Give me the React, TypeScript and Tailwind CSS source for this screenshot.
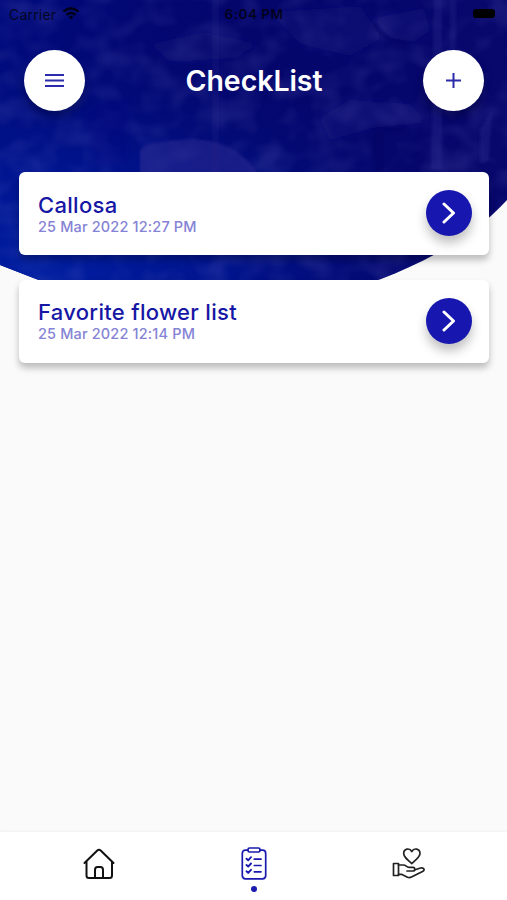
type CheckItem = {
  id: number;
  title: string;
  date: string;
};

const items: CheckItem[] = [
  { id: 1, title: 'Callosa', date: '25 Mar 2022 12:27 PM' },
  { id: 2, title: 'Favorite flower list', date: '25 Mar 2022 12:14 PM' },
];

function HeaderBackground() {
  return (
    <svg className="absolute left-0 top-0" width="507" height="312" viewBox="0 0 507 312" fill="none">
      <defs>
        <linearGradient id="base" x1="0" y1="0" x2="507" y2="0" gradientUnits="userSpaceOnUse">
          <stop offset="0" stopColor="#000a7c" />
          <stop offset="0.45" stopColor="#04066c" />
          <stop offset="1" stopColor="#07076c" />
        </linearGradient>
        <radialGradient id="glow" cx="0" cy="0" r="1" gradientUnits="userSpaceOnUse" gradientTransform="translate(30 280) scale(440 240)">
          <stop offset="0" stopColor="#001fa2" />
          <stop offset="0.45" stopColor="#001898" stopOpacity="0.75" />
          <stop offset="1" stopColor="#00107c" stopOpacity="0" />
        </radialGradient>
        <filter id="soft" x="-20%" y="-20%" width="140%" height="140%">
          <feGaussianBlur stdDeviation="3" />
        </filter>
        <filter id="edge" x="-20%" y="-20%" width="140%" height="140%">
          <feGaussianBlur stdDeviation="1.5" />
        </filter>
        {/* mottled foliage texture */}
        <filter id="leaves" x="0" y="0" width="100%" height="100%">
          <feTurbulence type="fractalNoise" baseFrequency="0.035 0.04" numOctaves="2" seed="8" />
          <feColorMatrix values="0 0 0 0 0.2  0 0 0 0 0.2  0 0 0 0 0.6  2.4 0 0 0 -0.95" />
        </filter>
        <clipPath id="curve">
          <path d="M0 0H507V200C478 232 435 258 381 279C270 320 150 320 36 279L0 265Z" />
        </clipPath>
      </defs>
      <g clipPath="url(#curve)">
        <rect width="507" height="312" fill="url(#base)" />
        <rect width="507" height="312" fill="url(#glow)" />
        <rect width="507" height="312" filter="url(#leaves)" opacity="0.16" />
        <g filter="url(#edge)">
          <path d="M140 150C146 142 160 143 176 140C196 138 212 140 226 146C240 152 250 162 258 174H140Z" fill="#2b2490" fillOpacity="0.55" />
          <path d="M212 0H219V172H212Z" fill="#24248a" fillOpacity="0.22" />
          <path d="M434 0H442V170H431Z" fill="#2c2c92" fillOpacity="0.32" />
          <path d="M450 0H456V50H450Z" fill="#2c2c92" fillOpacity="0.25" />
          <path d="M480 130L492 110L489 160L480 164Z" fill="#24248c" fillOpacity="0.4" />
          <path d="M374 24C382 38 396 44 410 42" stroke="#00005a" strokeWidth="4" strokeOpacity="0.5" />
          <path d="M372 126H406V132H384V172H376Z" fill="#00005a" fillOpacity="0.35" />
        </g>
        <g filter="url(#soft)">
          <path d="M150 44L205 32L258 44L236 58L170 62Z" fill="#1c1c80" fillOpacity="0.25" />
          <path d="M270 12L360 6L382 38L350 56L300 44Z" fill="#1c1c84" fillOpacity="0.25" />
          <path d="M374 18L390 38L414 42L430 30L424 8Z" fill="#1c1c84" fillOpacity="0.3" />
          <path d="M320 118L350 100L410 104L426 122L372 128L330 140Z" fill="#20208a" fillOpacity="0.28" />
          <path d="M84 110L130 96L128 160L96 168Z" fill="#12127c" fillOpacity="0.25" />
        </g>
      </g>
    </svg>
  );
}

function WifiIcon() {
  return (
    <svg width="18" height="13" viewBox="0 0 18 13" className="mb-px" fill="none" stroke="black" strokeOpacity="0.8" strokeWidth="2.500">
      <path d="M1.300 4.600Q9 -1.800 16.700 4.600" />
      <path d="M4.300 7.900Q9 4 13.700 7.900" />
      <path d="M9 12.500L6.600 10Q9 8 11.400 10Z" fill="black" fillOpacity="0.8" stroke="none" />
    </svg>
  );
}

function StatusBar() {
  return (
    <div className="grid h-7 grid-cols-3 items-center pl-[9px] pr-3 text-[14px] text-black/75">
      <div className="flex items-center gap-[6px]">
        <span className="tracking-[0.2px]">Carrier</span>
        <WifiIcon />
      </div>
      <span className="pl-1 text-center text-[13.5px] font-semibold tracking-[0.5px]">6:04 PM</span>
      <span className="mb-[2px] h-[9px] w-[22px] justify-self-end rounded-[3px] bg-black" />
    </div>
  );
}

function HomeIcon() {
  return (
    <svg width="34" height="34" viewBox="0 0 34 34" fill="none" stroke="#111" strokeWidth="2" strokeLinecap="round" strokeLinejoin="round">
      <path d="M2.500 16L15.300 3.500Q17 2 18.700 3.500L31.500 16" />
      <path d="M4.500 15V28.500Q4.500 31 7 31H27.500Q30 31 30 28.500V15" />
      <path d="M13 31V23Q13 20 15.500 20H18.500Q21 20 21 23V31" />
    </svg>
  );
}

function ClipboardIcon() {
  return (
    <svg width="26" height="34" viewBox="0 0 26 34" fill="none" stroke="#1a1aae" strokeWidth="1.700" strokeLinecap="round" strokeLinejoin="round">
      <path d="M7 3.200H4.500Q1.300 3.200 1.300 6.500V28.500Q1.300 31.800 4.500 31.800H21.500Q24.700 31.800 24.700 28.500V6.500Q24.700 3.200 21.500 3.200H19" />
      <rect x="7" y="1" width="12" height="4" rx="1.500" />
      <path d="M5.500 11.700L7.200 13.300L10 10.200M5.500 18L7.200 19.600L10 16.500M5.500 24.300L7.200 25.900L10 22.800" strokeWidth="1.900" />
      <path d="M13.300 12.200H20M13.300 18.500H20M13.300 24.800H20" />
    </svg>
  );
}

function DonateIcon() {
  return (
    <svg width="34" height="32" viewBox="0 0 34 32" fill="none" stroke="#222" strokeWidth="1.700" strokeLinecap="round" strokeLinejoin="round">
      <path d="M19.800 16.500C15 12.500 11.700 9.800 11.700 6.500C11.700 1.500 17.500 0.500 19.800 4.500C22 0.500 28 1.500 28 6.500C28 9.800 24.500 12.500 19.800 16.500Z" />
      <path d="M1.500 16.500H6.500V28.500H1.500Z" />
      <path d="M6.500 18H11.500C14 18 14.500 20.300 17 20.300H21C23.300 20.300 23.300 24 21 24H15" />
      <path d="M23 22.800L28.500 21C32 20.200 33.300 23 30.500 24.500L19.500 30Q17.500 31 15.500 30.300L9.500 27.300H6.500" />
    </svg>
  );
}

function ListCard({ item }: { item: CheckItem }) {
  return (
    <div className="flex h-[83px] items-center justify-between rounded-[6px] bg-white pl-[19px] pr-[17px] shadow-[0_5px_7px_rgba(0,0,0,0.25)]">
      <div className="flex flex-col">
        <span className="text-[22px] font-medium leading-[25px] tracking-[0.3px] text-[#1717a5]">{item.title}</span>
        <span className="text-[14.5px] font-[450] leading-[17px] tracking-[0.15px] text-[#8583d5]">{item.date}</span>
      </div>
      <button className="mb-px flex size-[46px] items-center justify-center rounded-full bg-[#1717b0] shadow-[0_7px_11px_rgba(0,0,0,0.25)]">
        <svg width="14" height="22" viewBox="0 0 14 22" fill="none" stroke="white" strokeWidth="3" strokeLinecap="round" strokeLinejoin="round">
          <path d="M2 2L11.500 11L2 20" />
        </svg>
      </button>
    </div>
  );
}

export default function App() {
  return (
    <div className="relative flex h-[900px] w-[507px] flex-col overflow-hidden bg-[#fafafa] font-['Inter',sans-serif]">
      <HeaderBackground />
      <div className="relative flex flex-1 flex-col">
        <StatusBar />
        <header className="mt-[22px] flex items-center justify-between pl-6 pr-[23px]">
          <button className="flex size-[61px] items-center justify-center rounded-full bg-white shadow-[0_6px_10px_rgba(0,0,0,0.25)]">
            <svg width="19" height="14" viewBox="0 0 19 14" stroke="#2b2bab" strokeWidth="2">
              <path d="M0 1H19M0 6.500H19M0 12H19" />
            </svg>
          </button>
          <h1 className="text-[28.5px] font-semibold leading-9 tracking-[-0.05px] text-white">CheckList</h1>
          <button className="flex size-[61px] items-center justify-center rounded-full bg-white shadow-[0_6px_10px_rgba(0,0,0,0.25)]">
            <svg width="15" height="15" viewBox="0 0 15 15" stroke="#2b2bab" strokeWidth="2">
              <path d="M7.500 0V15M0 7.500H15" />
            </svg>
          </button>
        </header>
        <main className="mt-[61px] flex flex-col gap-[24.5px] pl-[19px] pr-[18px]">
          {items.map((item) => (
            <ListCard key={item.id} item={item} />
          ))}
        </main>
      </div>
      <nav className="relative grid h-[68px] grid-cols-3 bg-white px-[21px] pt-[15px] shadow-[0_-1px_2px_rgba(0,0,0,0.04)]">
        <div className="flex justify-center">
          <HomeIcon />
        </div>
        <div className="flex flex-col items-center gap-[5px]">
          <ClipboardIcon />
          <span className="size-[6px] rounded-full bg-[#1a1aae]" />
        </div>
        <div className="flex justify-center">
          <DonateIcon />
        </div>
      </nav>
    </div>
  );
}
